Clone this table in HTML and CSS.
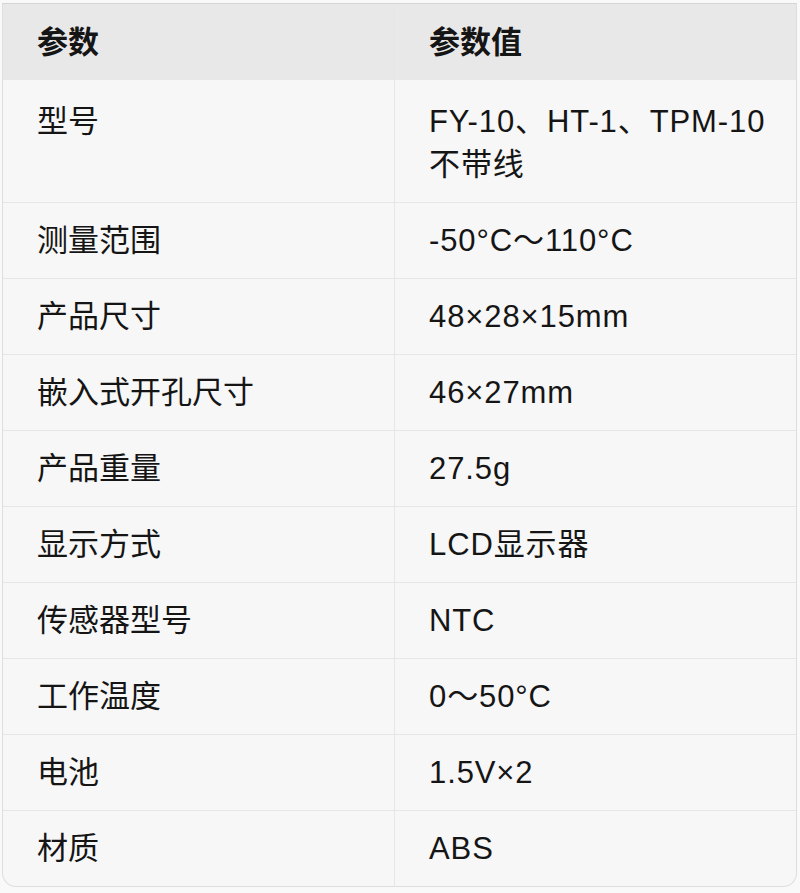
FILE: index.html
```html
<!DOCTYPE html>
<html lang="zh">
<head>
<meta charset="utf-8">
<link rel="stylesheet" href="styles.css">
</head>
<body>
<div class="wrap">
<table class="spec">
<colgroup><col class="c1"><col class="c2"></colgroup>
<thead>
<tr><th>参数</th><th>参数值</th></tr>
</thead>
<tbody>
<tr class="tall"><td>型号</td><td>FY-10、HT-1、TPM-10<br>不带线</td></tr>
<tr><td>测量范围</td><td>-50°C～110°C</td></tr>
<tr><td>产品尺寸</td><td>48×28×15mm</td></tr>
<tr><td>嵌入式开孔尺寸</td><td>46×27mm</td></tr>
<tr><td>产品重量</td><td>27.5g</td></tr>
<tr><td>显示方式</td><td>LCD显示器</td></tr>
<tr><td>传感器型号</td><td>NTC</td></tr>
<tr><td>工作温度</td><td>0～50°C</td></tr>
<tr><td>电池</td><td>1.5V×2</td></tr>
<tr><td>材质</td><td>ABS</td></tr>
</tbody>
</table>
</div>
</body>
</html>
```

FILE: styles.css
```css
html, body {
  margin: 0;
  padding: 0;
  background: #f9f9f9;
}
.wrap {
  padding: 3px 5px 0 2px;
}
.spec {
  width: 793px;
  table-layout: fixed;
  border-collapse: separate;
  border-spacing: 0;
  border: 1px solid #dedede;
  border-top-color: #d4d4d4;
  border-radius: 0 0 14px 14px;
  overflow: hidden;
  background: #f7f7f7;
  font-family: "Liberation Sans", "Noto Sans CJK SC", sans-serif;
  font-size: 31px;
  color: #151515;
}
.spec .c1 { width: 392px; }
.spec .c2 { width: 401px; }
.spec th, .spec td {
  text-align: left;
  vertical-align: top;
  padding: 16px 10px 16px 34px;
  line-height: 43px;
  border-bottom: 1px solid #e6e6e6;
  white-space: nowrap;
}
.spec th:first-child, .spec td:first-child {
  border-right: 1px solid #e6e6e6;
}
.spec td:last-child {
  letter-spacing: 0.9px;
}
.spec th {
  background: #e8e8e8;
  font-weight: bold;
  padding-top: 17px;
  padding-bottom: 16px;
  border-bottom: none;
}
.spec tr.tall td {
  padding-top: 20px;
  padding-bottom: 16px;
}
.spec tbody tr:last-child td {
  border-bottom: none;
}
```
